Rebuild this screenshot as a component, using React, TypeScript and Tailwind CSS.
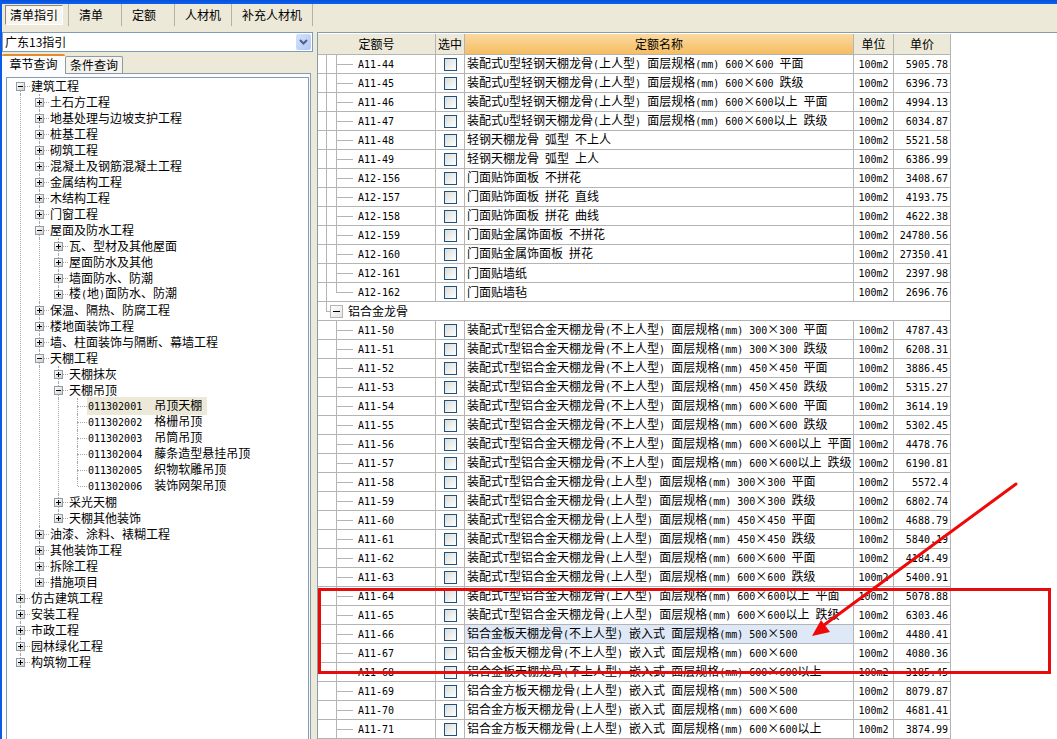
import { Fragment, useState } from "react"
import clsx from "clsx"

type TreeNode = { name: string; code?: string; open?: boolean; children?: TreeNode[] }
type Quota = { code: string; name: string; price: string }

const toolbar = ["清单指引", "清单", "定额", "人材机", "补充人材机"]

const tree: TreeNode[] = [
  {
    name: "建筑工程",
    open: true,
    children: [
      { name: "土石方工程" },
      { name: "地基处理与边坡支护工程" },
      { name: "桩基工程" },
      { name: "砌筑工程" },
      { name: "混凝土及钢筋混凝土工程" },
      { name: "金属结构工程" },
      { name: "木结构工程" },
      { name: "门窗工程" },
      {
        name: "屋面及防水工程",
        open: true,
        children: [
          { name: "瓦、型材及其他屋面" },
          { name: "屋面防水及其他" },
          { name: "墙面防水、防潮" },
          { name: "楼(地)面防水、防潮" },
        ],
      },
      { name: "保温、隔热、防腐工程" },
      { name: "楼地面装饰工程" },
      { name: "墙、柱面装饰与隔断、幕墙工程" },
      {
        name: "天棚工程",
        open: true,
        children: [
          { name: "天棚抹灰" },
          {
            name: "天棚吊顶",
            open: true,
            children: [
              { code: "011302001", name: "吊顶天棚" },
              { code: "011302002", name: "格栅吊顶" },
              { code: "011302003", name: "吊筒吊顶" },
              { code: "011302004", name: "藤条造型悬挂吊顶" },
              { code: "011302005", name: "织物软雕吊顶" },
              { code: "011302006", name: "装饰网架吊顶" },
            ],
          },
          { name: "采光天棚" },
          { name: "天棚其他装饰" },
        ],
      },
      { name: "油漆、涂料、裱糊工程" },
      { name: "其他装饰工程" },
      { name: "拆除工程" },
      { name: "措施项目" },
    ],
  },
  { name: "仿古建筑工程" },
  { name: "安装工程" },
  { name: "市政工程" },
  { name: "园林绿化工程" },
  { name: "构筑物工程" },
]

const lightSteel: Quota[] = [
  { code: "A11-44", name: "装配式U型轻钢天棚龙骨(上人型) 面层规格(mm) 600×600 平面", price: "5905.78" },
  { code: "A11-45", name: "装配式U型轻钢天棚龙骨(上人型) 面层规格(mm) 600×600 跌级", price: "6396.73" },
  { code: "A11-46", name: "装配式U型轻钢天棚龙骨(上人型) 面层规格(mm) 600×600以上 平面", price: "4994.13" },
  { code: "A11-47", name: "装配式U型轻钢天棚龙骨(上人型) 面层规格(mm) 600×600以上 跌级", price: "6034.87" },
  { code: "A11-48", name: "轻钢天棚龙骨 弧型 不上人", price: "5521.58" },
  { code: "A11-49", name: "轻钢天棚龙骨 弧型 上人", price: "6386.99" },
  { code: "A12-156", name: "门面贴饰面板 不拼花", price: "3408.67" },
  { code: "A12-157", name: "门面贴饰面板 拼花 直线", price: "4193.75" },
  { code: "A12-158", name: "门面贴饰面板 拼花 曲线", price: "4622.38" },
  { code: "A12-159", name: "门面贴金属饰面板 不拼花", price: "24780.56" },
  { code: "A12-160", name: "门面贴金属饰面板 拼花", price: "27350.41" },
  { code: "A12-161", name: "门面贴墙纸", price: "2397.98" },
  { code: "A12-162", name: "门面贴墙毡", price: "2696.76" },
]

const aluminium: Quota[] = [
  { code: "A11-50", name: "装配式T型铝合金天棚龙骨(不上人型) 面层规格(mm) 300×300 平面", price: "4787.43" },
  { code: "A11-51", name: "装配式T型铝合金天棚龙骨(不上人型) 面层规格(mm) 300×300 跌级", price: "6208.31" },
  { code: "A11-52", name: "装配式T型铝合金天棚龙骨(不上人型) 面层规格(mm) 450×450 平面", price: "3886.45" },
  { code: "A11-53", name: "装配式T型铝合金天棚龙骨(不上人型) 面层规格(mm) 450×450 跌级", price: "5315.27" },
  { code: "A11-54", name: "装配式T型铝合金天棚龙骨(不上人型) 面层规格(mm) 600×600 平面", price: "3614.19" },
  { code: "A11-55", name: "装配式T型铝合金天棚龙骨(不上人型) 面层规格(mm) 600×600 跌级", price: "5302.45" },
  { code: "A11-56", name: "装配式T型铝合金天棚龙骨(不上人型) 面层规格(mm) 600×600以上 平面", price: "4478.76" },
  { code: "A11-57", name: "装配式T型铝合金天棚龙骨(不上人型) 面层规格(mm) 600×600以上 跌级", price: "6190.81" },
  { code: "A11-58", name: "装配式T型铝合金天棚龙骨(上人型) 面层规格(mm) 300×300 平面", price: "5572.4" },
  { code: "A11-59", name: "装配式T型铝合金天棚龙骨(上人型) 面层规格(mm) 300×300 跌级", price: "6802.74" },
  { code: "A11-60", name: "装配式T型铝合金天棚龙骨(上人型) 面层规格(mm) 450×450 平面", price: "4688.79" },
  { code: "A11-61", name: "装配式T型铝合金天棚龙骨(上人型) 面层规格(mm) 450×450 跌级", price: "5840.19" },
  { code: "A11-62", name: "装配式T型铝合金天棚龙骨(上人型) 面层规格(mm) 600×600 平面", price: "4184.49" },
  { code: "A11-63", name: "装配式T型铝合金天棚龙骨(上人型) 面层规格(mm) 600×600 跌级", price: "5400.91" },
  { code: "A11-64", name: "装配式T型铝合金天棚龙骨(上人型) 面层规格(mm) 600×600以上 平面", price: "5078.88" },
  { code: "A11-65", name: "装配式T型铝合金天棚龙骨(上人型) 面层规格(mm) 600×600以上 跌级", price: "6303.46" },
  { code: "A11-66", name: "铝合金板天棚龙骨(不上人型) 嵌入式 面层规格(mm) 500×500", price: "4480.41" },
  { code: "A11-67", name: "铝合金板天棚龙骨(不上人型) 嵌入式 面层规格(mm) 600×600", price: "4080.36" },
  { code: "A11-68", name: "铝合金板天棚龙骨(不上人型) 嵌入式 面层规格(mm) 600×600以上", price: "3185.45" },
  { code: "A11-69", name: "铝合金方板天棚龙骨(上人型) 嵌入式 面层规格(mm) 500×500", price: "8079.87" },
  { code: "A11-70", name: "铝合金方板天棚龙骨(上人型) 嵌入式 面层规格(mm) 600×600", price: "4681.41" },
  { code: "A11-71", name: "铝合金方板天棚龙骨(上人型) 嵌入式 面层规格(mm) 600×600以上", price: "3874.99" },
]

// latin characters take half the width of a chinese one
const Mixed = ({ text }: { text: string }) => (
  <>
    {text.split(/([\x20-\x7e]+)/).map((part, i) =>
      i % 2 ? (
        <span key={i} className="font-['DejaVu_Sans_Mono',monospace] text-[10px]">
          {part}
        </span>
      ) : (
        <Fragment key={i}>{part}</Fragment>
      )
    )}
  </>
)

const Toggle = ({ open, name, onClick }: { open: boolean; name: string; onClick?: () => void }) => (
  <button
    type="button"
    aria-label={name}
    aria-expanded={open}
    onClick={onClick}
    className="block size-[9px] shrink-0 border border-[#8a9cae] bg-linear-to-br from-white to-[#d4d0c5]"
  >
    <svg viewBox="0 0 7 7" className="size-[7px]" shapeRendering="crispEdges">
      <path d={open ? "M1 3h5v1H1z" : "M1 3h5v1H1zM3 1h1v5H3z"} fill="#000" />
    </svg>
  </button>
)

const Branch = ({ nodes, root = false }: { nodes: TreeNode[]; root?: boolean }) => (
  <ul>
    {nodes.map((node, i) => (
      <Item key={node.name} node={node} first={root && i === 0} last={i === nodes.length - 1} />
    ))}
  </ul>
)

const Item = ({ node, first, last }: { node: TreeNode; first: boolean; last: boolean }) => {
  const [open, setOpen] = useState(!!node.open)
  const selected = node.code === "011302001"

  return (
    <li>
      <div className="flex h-4 items-center">
        <div className="flex h-4 w-[9px] shrink-0 flex-col">
          <span
            className={clsx("ml-1 flex-1 border-l border-dotted", first ? "border-transparent" : "border-[#a8a8a8]")}
          />
          {!node.code && <Toggle open={open} name={node.name} onClick={() => setOpen(!open)} />}
          <span
            className={clsx("ml-1 flex-1 border-l border-dotted", last ? "border-transparent" : "border-[#a8a8a8]")}
          />
        </div>
        <span
          className={clsx("border-t border-dotted border-[#a8a8a8]", node.code ? "-ml-1 w-[9px]" : "w-[5px]")}
        />
        <span className={clsx("pl-px whitespace-pre", selected && "bg-[#ece9d8] pr-[5px]")}>
          <Mixed text={node.code ? node.code + "  " + node.name : node.name} />
        </span>
      </div>
      {open && node.children && (
        <div className="flex">
          <div className="flex w-[19px] shrink-0">
            <span className={clsx("ml-1", !last && "border-l border-dotted border-[#a8a8a8]")} />
          </div>
          <Branch nodes={node.children} />
        </div>
      )}
    </li>
  )
}

const cell = "h-[19px] border-r border-b border-[#b4b4b4] p-0"

const Row = ({ quota, last, outer }: { quota: Quota; last: boolean; outer: boolean }) => (
  <tr>
    <td className={cell}>
      <div className="flex h-[18px] items-center">
        <span className={clsx("ml-2 w-[10px] self-stretch border-l", outer ? "border-[#b4b4b4]" : "border-transparent")} />
        <span className="flex w-[17px] flex-col self-stretch">
          <span className="h-[10px] border-b border-l border-[#b4b4b4]" />
          <span className={clsx("flex-1 border-l", last ? "border-transparent" : "border-[#b4b4b4]")} />
        </span>
        <span className="ml-[5px]">
          <Mixed text={quota.code} />
        </span>
      </div>
    </td>
    <td className={cell}>
      <input
        type="checkbox"
        aria-label={quota.code}
        className="mx-auto block size-[13px] appearance-none border border-[#1c5180] bg-linear-to-br from-[#dcdcd7] to-white checked:bg-[#21a121]"
      />
    </td>
    <td className={clsx(cell, "pl-[2px]", quota.code === "A11-66" && "bg-[#dfe8f6]")}>
      <Mixed text={quota.name} />
    </td>
    <td className={clsx(cell, "text-center")}>
      <Mixed text="100m2" />
    </td>
    <td className={clsx(cell, "pr-[2px] text-right")}>
      <Mixed text={quota.price} />
    </td>
  </tr>
)

const QuotaTable = () => {
  const [open, setOpen] = useState(true)
  const head = "h-[21px] border-r border-b border-[#b4b4b4] p-0 font-normal"

  return (
    <table className="w-[633px] table-fixed border-separate border-spacing-0 whitespace-pre">
      <colgroup>
        <col className="w-[118px]" />
        <col className="w-[29px]" />
        <col />
        <col className="w-[40px]" />
        <col className="w-[57px]" />
      </colgroup>
      <thead className="bg-[#ece9d8]">
        <tr>
          <th className={head}>定额号</th>
          <th className={head}>选中</th>
          <th className={clsx(head, "bg-linear-to-b from-[#fbd9a0] to-[#f5bd60]")}>定额名称</th>
          <th className={head}>单位</th>
          <th className={head}>单价</th>
        </tr>
      </thead>
      <tbody>
        {lightSteel.map((q, i) => (
          <Row key={q.code} quota={q} outer last={i === lightSteel.length - 1} />
        ))}
        <tr>
          <td colSpan={5} className={cell}>
            <div className="flex h-[18px] items-center">
              <span className="ml-2 h-[10px] w-1 self-start border-b border-l border-[#b4b4b4]" />
              <button
                type="button"
                aria-label="铝合金龙骨"
                aria-expanded={open}
                onClick={() => setOpen(!open)}
                className="size-[13px] border border-[#b4b4b4] bg-linear-to-br from-white to-[#e4e4e4]"
              >
                <svg viewBox="0 0 11 11" className="size-[11px]" shapeRendering="crispEdges">
                  <path d="M2 5h7v1H2z" fill="#000" />
                </svg>
              </button>
              <span className="ml-[5px]">铝合金龙骨</span>
            </div>
          </td>
        </tr>
        {open && aluminium.map((q) => <Row key={q.code} quota={q} outer={false} last={false} />)}
      </tbody>
    </table>
  )
}

export default function App() {
  const [active, setActive] = useState("清单指引")

  return (
    <div className="relative flex min-h-screen flex-col overflow-hidden border-l-2 border-[#0a5be8] bg-[#ece9d8] font-['Noto_Sans_CJK_SC',sans-serif] text-[12px] leading-4 text-black">
      <div className="h-1 bg-linear-to-b from-[#0a4fd6] to-[#0a62f5]" />

      <nav className="flex h-7 items-start">
        {toolbar.map((name) => (
          <div
            key={name}
            className="flex h-[22px] min-w-[53px] items-center border-r border-[#b5b2a2] px-[3px]"
          >
            <button
              type="button"
              onClick={() => setActive(name)}
              className={clsx(
                "h-5 border",
                name === active
                  ? "mr-[2px] border-t-[#8a8778] border-r-white border-b-white border-l-[#8a8778] bg-[#f7f5ee] px-1"
                  : "border-transparent px-[6px]"
              )}
            >
              {name}
            </button>
          </div>
        ))}
      </nav>

      <div className="flex flex-1">
        <aside className="flex w-[315px] shrink-0 flex-col pr-1">
          <div className="relative">
            <select
              aria-label="指引"
              className="block h-5 w-full appearance-none border border-[#7f9db9] bg-white px-[2px] leading-4"
            >
              <option>广东13指引</option>
            </select>
            <span className="pointer-events-none absolute inset-y-[2px] right-[2px] flex w-[15px] items-center justify-center rounded-[2px] bg-linear-to-br from-[#d6e2fd] to-[#b3c7f5]">
              <svg viewBox="0 0 9 6" className="h-[6px] w-[9px]">
                <path d="M1 1l3.500 3.500L8 1" fill="none" stroke="#4d6185" strokeWidth="2" />
              </svg>
            </span>
          </div>

          <div role="tablist" className="mt-[2px] flex items-end">
            <button
              type="button"
              role="tab"
              aria-selected="true"
              className="z-10 -mb-px h-5 w-[63px] rounded-t-[2px] border-t-2 border-[#e68b2c] bg-[#fcfcfe] pb-[2px]"
            >
              章节查询
            </button>
            <button
              type="button"
              role="tab"
              aria-selected="false"
              className="h-[17px] rounded-t-[2px] border border-b-0 border-[#919b9c] bg-[#f4f3ee] px-1"
            >
              条件查询
            </button>
          </div>

          <div className="mr-[2px] flex flex-1 flex-col border-t border-r border-[#8a9ba8] bg-[#fcfcfe] pt-[3px] pr-px pl-1">
            <div className="flex-1 border border-b-0 border-[#7f9db9] bg-white pl-[9px] whitespace-nowrap">
              <Branch nodes={tree} root />
            </div>
          </div>
        </aside>

        <main className="min-w-0 flex-1 border-t border-l border-[#8a9ba8] bg-white pt-px">
          <QuotaTable />
        </main>
      </div>

      {/* marked rows and the arrow that points at them */}
      <div className="pointer-events-none absolute top-[588px] left-[316px] h-[86px] w-[733px] border-3 border-[#e60c0c]" />
      <svg viewBox="0 0 208 156" className="pointer-events-none absolute top-[482px] left-[808px] h-[156px] w-[208px]">
        <path d="M206 2L14 143" stroke="#f00808" strokeWidth="3" strokeLinecap="round" />
        <path d="M2 154l9-16 9 12z" fill="#f00808" />
      </svg>
    </div>
  )
}
